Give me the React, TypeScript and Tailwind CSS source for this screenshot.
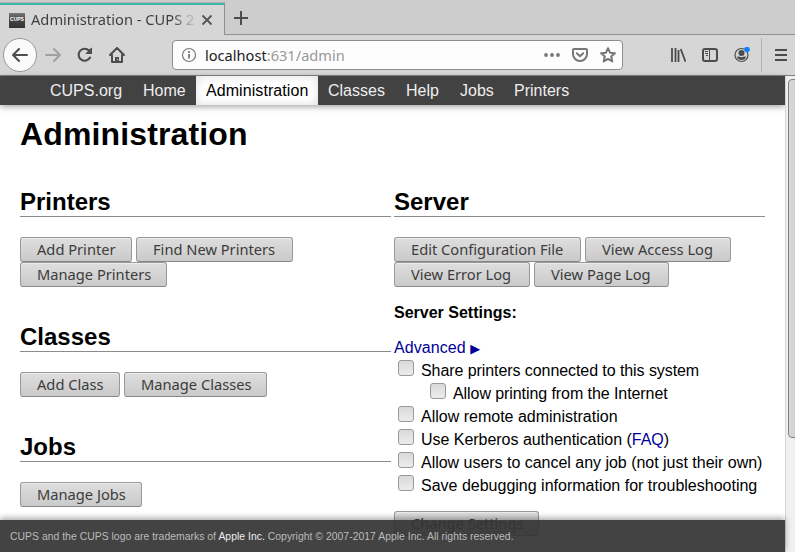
import React from "react";

const ui = "font-['Noto_Sans',sans-serif]";

function Button({ children, width }: { children: React.ReactNode; width: string }) {
  return (
    <button
      className={`${ui} ${width} flex h-[25px] shrink-0 items-start whitespace-nowrap rounded-[3px] border border-[#999] border-b-[#888] bg-linear-to-b from-[#dedede] to-[#cacaca] pt-px pl-4 text-[14.67px] leading-5 text-[#3c3c3c] shadow-[inset_0_1px_0_#ececec]`}
    >
      {children}
    </button>
  );
}

function Heading({ children }: { children: React.ReactNode }) {
  return (
    <h2 className="h-[29px] border-b border-[#8c8c8c] text-2xl leading-[28px] font-bold">{children}</h2>
  );
}

function Option({
  children,
  nested = false,
  tracking = "",
}: {
  children: React.ReactNode;
  nested?: boolean;
  tracking?: string;
}) {
  return (
    <label className={`flex h-[23px] whitespace-nowrap ${nested ? "pl-9" : "pl-1"}`}>
      <span className="mr-[7px] h-4 w-4 shrink-0 rounded-[3px] border border-[#999] bg-linear-to-b from-[#d9d9d9] to-[#ececec]" />
      <span className={`pt-[2px] leading-[18px] ${tracking}`}>{children}</span>
    </label>
  );
}

function NavItem({ children, width, active = false }: { children: React.ReactNode; width: string; active?: boolean }) {
  return (
    <a
      className={`flex h-[29px] items-center px-[10px] leading-[18px] whitespace-nowrap ${width} ${
        active ? "bg-white tracking-[0.07px] text-black shadow-[inset_0_0_10px_#ddd]" : "text-[#eee]"
      }`}
    >
      {children}
    </a>
  );
}

function Tabs() {
  return (
    <div className="flex h-[35px] bg-[#cdcdcd] pt-[2px]">
      <div className="h-[33px] w-[225px] border-t border-r border-t-[#b0b0b0] border-r-[#909090] bg-[#d6d6d6]">
        <div className="flex h-8 items-center border-t-2 border-[#3cb8a8] pl-[9px]">
          <div className="flex h-[15px] w-4 items-center justify-center bg-linear-to-b from-[#777] via-[#444] to-[#333] font-['Liberation_Sans',sans-serif] text-[5px] font-bold text-white">
            CUPS
          </div>
          <div className={`${ui} mb-[3px] ml-[6px] w-[166px] whitespace-nowrap bg-linear-to-r from-[#3c3c3c] from-85% to-transparent bg-clip-text text-[14.67px] leading-5 text-transparent`}>
            Administration - CUPS 2
          </div>
          <svg className="ml-1" width="12" height="12" viewBox="0 0 12 12" stroke="#555" strokeWidth="1.8">
            <path d="M1.5 1.5l9 9M10.5 1.5l-9 9" />
          </svg>
        </div>
      </div>
      <div className="h-[33px] flex-1 border-b border-[#909090] pt-[9px] pl-[9px]">
        <svg width="14" height="14" viewBox="0 0 14 14" stroke="#4c4c4c" strokeWidth="2">
          <path d="M7 0v14M0 7h14" />
        </svg>
      </div>
    </div>
  );
}

function Toolbar() {
  return (
    <div className="flex h-[41px] items-center border-b border-[#808080] bg-[#d6d6d6] pl-[3px] text-[#4c4c4c]">
      <div className="flex h-[34px] w-[34px] shrink-0 items-center justify-center rounded-full border border-[#989898] bg-[#fafafa]">
        <svg width="18" height="16" viewBox="0 0 18 16" fill="none" stroke="currentColor" strokeWidth="2" strokeLinecap="round" strokeLinejoin="round">
          <path d="M16 8H2M8 2L2 8l6 6" />
        </svg>
      </div>
      <svg className="ml-[7px] shrink-0 text-[#a0a0a0]" width="18" height="16" viewBox="0 0 18 16" fill="none" stroke="currentColor" strokeWidth="2" strokeLinecap="round" strokeLinejoin="round">
        <path d="M2 8h14M10 2l6 6-6 6" />
      </svg>
      <svg className="ml-[15px] shrink-0" width="16" height="16" viewBox="0 0 16 16" fill="none" stroke="currentColor" strokeWidth="2.1" strokeLinecap="round">
        <path d="M13 10.500A6 6 0 1 1 12 3.600" />
        <path d="M15 1v6H9q-.7-.2-.2-.8l5.400-5.400q.6-.4.800.2z" fill="currentColor" stroke="none" />
      </svg>
      <svg className="ml-4 shrink-0" width="16" height="16" viewBox="0 0 16 16" fill="none" stroke="currentColor" strokeWidth="2" strokeLinecap="round" strokeLinejoin="round">
        <path d="M1 8l7-7 7 7M3 8v7h10V8" />
        <path d="M6 15v-5h4v5z" fill="currentColor" stroke="none" />
        <path d="M8.500 12v1" stroke="#d6d6d6" strokeWidth="1" strokeLinecap="butt" />
      </svg>
      <div className="ml-[47px] flex h-[30px] w-[451px] shrink-0 items-center rounded-[4px] border border-[#8c8c8c] bg-[#fdfdfd] pl-2 text-[#777]">
        <svg width="16" height="16" viewBox="0 0 16 16" fill="none" stroke="currentColor">
          <circle cx="8" cy="8" r="6.500" strokeWidth="1.200" />
          <path d="M8 7v4.500M8 4v2" strokeWidth="1.800" />
        </svg>
        <div className={`${ui} ml-2 flex-1 text-[14.620px] leading-5 text-[#999]`}>
          <span className="text-[#202020]">localhost</span>:631/admin
        </div>
        <svg width="16" height="4" viewBox="0 0 16 4" fill="currentColor">
          <circle cx="2" cy="2" r="1.900" /><circle cx="8" cy="2" r="1.900" /><circle cx="14" cy="2" r="1.900" />
        </svg>
        <svg className="ml-3" width="16" height="16" viewBox="0 0 16 16" fill="none" stroke="currentColor" strokeWidth="2" strokeLinecap="round" strokeLinejoin="round">
          <path d="M2 2h12q1 0 1 1v4a7 7 0 0 1-14 0V3q0-1 1-1zM4.800 6.200L8 9.200l3.200-3" />
        </svg>
        <svg className="mr-[6px] ml-3" width="16" height="16" viewBox="0 0 16 16" fill="none" stroke="currentColor" strokeWidth="2" strokeLinejoin="round">
          <path d="M8 1.200l2 4.500 4.900.5-3.700 3.300 1.100 4.900L8 11.900l-4.300 2.500 1.100-4.900L1.100 6.200l4.900-.5z" />
        </svg>
      </div>
      <svg className="ml-[47px] shrink-0" width="16" height="16" viewBox="0 0 16 16" fill="none" stroke="currentColor" strokeWidth="2">
        <path d="M2 1v14M5.500 1v14M8.500 3v12M10.700 2l4.800 12.800" strokeWidth="1.800" />
      </svg>
      <svg className="ml-4 shrink-0" width="16" height="16" viewBox="0 0 16 16" fill="none" stroke="currentColor" strokeWidth="2">
        <rect x="1" y="2" width="14" height="12" rx="2" />
        <path d="M7.500 2v12" strokeWidth="1" />
        <path d="M3 4.500h3M3 6.500h3M4 8.500h2" strokeWidth="1" />
      </svg>
      <svg className="ml-4 shrink-0" width="18" height="16" viewBox="0 0 18 16">
        <circle cx="7.500" cy="8" r="6.500" fill="none" stroke="currentColor" strokeWidth="1.200" />
        <circle cx="7.500" cy="6" r="3" fill="currentColor" />
        <path d="M3 9.800q1.300-.8 2.500 0 2 .900 4 0 1.200-.8 2.500 0-.8 3.200-4.500 3.200T3 9.800z" fill="currentColor" />
        <circle cx="13" cy="2.500" r="2.800" fill="#0a84ff" />
      </svg>
      <div className="ml-[9px] h-[34px] w-px bg-[#b4b4b4]" />
      <svg className="ml-[13px] shrink-0" width="12" height="14" viewBox="0 0 12 14" stroke="currentColor" strokeWidth="2">
        <path d="M0 2h12M0 7h12M0 12h12" />
      </svg>
    </div>
  );
}

export default function App() {
  return (
    <div className="relative h-[552px] w-[795px] overflow-hidden bg-white font-['Liberation_Sans',Arial,sans-serif] text-base text-black">
      <Tabs />
      <Toolbar />
      <div className="flex h-[476px]">
        <main className="w-[785px]">
          <nav className="flex h-[29px] bg-[#424242] pl-10 shadow-[0_2px_6px_rgba(0,0,0,0.35)]">
            <NavItem width="w-[93px]">CUPS.org</NavItem>
            <NavItem width="w-[63px]">Home</NavItem>
            <NavItem width="w-[122px]" active>Administration</NavItem>
            <NavItem width="w-[78px]">Classes</NavItem>
            <NavItem width="w-[54px]">Help</NavItem>
            <NavItem width="w-[54px]">Jobs</NavItem>
            <NavItem width="w-[75px]">Printers</NavItem>
          </nav>
          <div className="px-5 pt-[11px]">
            <h1 className="h-[37px] text-[32px] leading-[37px] font-bold tracking-[0.14px]">Administration</h1>
            <div className="mt-[35px] flex gap-[3px]">
              <div className="w-[371px]">
                <Heading>Printers</Heading>
                <div className="mt-5 flex flex-wrap gap-x-1">
                  <Button width="w-[112px]">Add Printer</Button>
                  <Button width="w-[157px]">Find New Printers</Button>
                  <Button width="w-[147px]">Manage Printers</Button>
                </div>
                <div className="mt-9"><Heading>Classes</Heading></div>
                <div className="mt-5 flex gap-1">
                  <Button width="w-[100px]">Add Class</Button>
                  <Button width="w-[143px]">Manage Classes</Button>
                </div>
                <div className="mt-9"><Heading>Jobs</Heading></div>
                <div className="mt-5 flex">
                  <Button width="w-[122px]">Manage Jobs</Button>
                </div>
              </div>
              <div className="w-[371px]">
                <Heading>Server</Heading>
                <div className="mt-5 flex flex-wrap gap-x-1">
                  <Button width="w-[187px]">Edit Configuration File</Button>
                  <Button width="w-[146px]">View Access Log</Button>
                  <Button width="w-[136px]">View Error Log</Button>
                  <Button width="w-[135px]">View Page Log</Button>
                </div>
                <p className="mt-[17px] h-[18px] leading-[18px] font-bold">Server Settings:</p>
                <p className="mt-[17px] h-[21px] leading-[18px] tracking-[0.08px] text-[#000099]">
                  Advanced <span className="font-['DejaVu_Sans',sans-serif] text-[12.8px]">▶</span>
                </p>
                <Option tracking="tracking-[-0.075px]">Share printers connected to this system</Option>
                <Option tracking="tracking-[-0.075px]" nested>Allow printing from the Internet</Option>
                <Option>Allow remote administration</Option>
                <Option tracking="tracking-[-0.03px]">Use Kerberos authentication (<a className="text-[#000099]">FAQ</a>)</Option>
                <Option tracking="tracking-[-0.02px]">Allow users to cancel any job (not just their own)</Option>
                <Option>Save debugging information for troubleshooting</Option>
                <div className="mt-[13px] flex">
                  <Button width="w-[145px]">Change Settings</Button>
                </div>
              </div>
            </div>
          </div>
        </main>
        <div className="w-[10px] overflow-hidden border-l border-[#d4d4d4] bg-[#f0f0f0] pt-[3px] pl-[2px]">
          <div className="h-[359px] w-[14px] rounded-[4px] border border-[#808080] bg-linear-to-r from-[#dadada] to-[#c8c8c8]" />
        </div>
      </div>
      <footer className="absolute bottom-0 left-0 h-8 w-[785px] bg-[#333333]/92 px-[10px] pt-[11px] text-[10.4px] leading-3 tracking-[0.025px] text-[#bbb] shadow-[0_-2px_6px_rgba(0,0,0,0.35)]">
        CUPS and the CUPS logo are trademarks of <a className="text-[#eee]">Apple Inc.</a> Copyright © 2007-2017 Apple Inc. All rights reserved.
      </footer>
    </div>
  );
}
